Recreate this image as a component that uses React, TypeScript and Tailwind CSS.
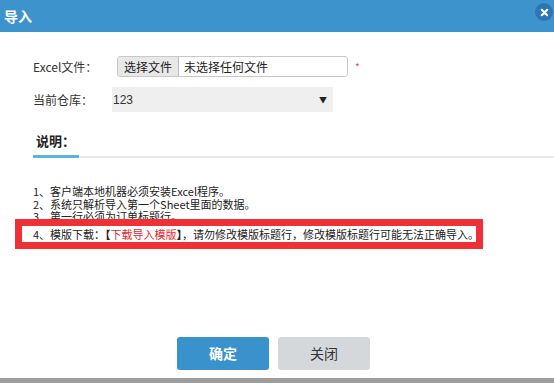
import React from 'react'

const cjk = { fontFamily: '"Noto Sans CJK SC", "Liberation Sans", sans-serif' }

function CloseButton() {
  return (
    <span className="absolute right-[1px] top-[3px] flex h-[18px] w-[18px] items-center justify-center rounded-full bg-[#2c76b4]">
      <svg viewBox="0 0 10 10" className="h-[9px] w-[9px]">
        <path d="M2 2 L8 8 M8 2 L2 8" stroke="#fff" strokeWidth="2.4" strokeLinecap="round" />
      </svg>
    </span>
  )
}

export default function App() {
  return (
    <div className="flex h-[383px] w-[554px] flex-col overflow-hidden bg-white text-[#333]" style={cjk}>
      <div className="relative flex h-[32px] shrink-0 items-center bg-[#3d94cc] pl-[4px]">
        <h1 className="text-[14px] font-bold text-white">导入</h1>
        <CloseButton />
      </div>

      <div className="pl-[33px]">
        <div className="mt-[24px] flex h-[21px] items-center text-[12px]">
          <label className="w-[84px]">Excel文件：</label>
          <div className="flex h-[21px] w-[231px] items-center rounded-[3px] border border-[#c8c8c8] bg-white">
            <span className="flex h-full w-[61px] items-center justify-center rounded-l-[2px] border-r border-[#bdbdbd] bg-[#e8e8e8] text-[#222]">
              选择文件
            </span>
            <span className="pl-[5px] text-[#222]">未选择任何文件</span>
          </div>
          <span className="ml-[7px] text-[10px] text-[#e04b4b]">*</span>
        </div>

        <div className="mt-[10px] flex h-[25px] items-center text-[12px]">
          <label className="w-[79px]">当前仓库：</label>
          <div className="flex h-[25px] w-[221px] items-center justify-between bg-[#efefef] pl-[1px] pr-[6px]">
            <span className="text-[#333]" style={{ fontFamily: '"Liberation Sans", sans-serif' }}>123</span>
            <span className="text-[8px] text-[#222]">▼</span>
          </div>
        </div>

        <div className="mt-[21px] flex border-b-2 border-[#e6e8ea]">
          <div className="-mb-[2px] w-[46px] border-b-[3px] border-[#5cb3e3] pb-[6px] pl-[3px] text-[13px] font-bold leading-[16px] text-[#222]">
            说明：
          </div>
        </div>

        <div className="mt-[27px] text-[11px] leading-[12.5px] text-[#222]">
          <p>1、客户端本地机器必须安装Excel程序。</p>
          <p>2、系统只解析导入第一个Sheet里面的数据。</p>
          <p>3、第一行必须为订单标题行。</p>
          <div className="relative -mt-[4px] ml-[-18px] w-[468px] border-[7px] border-[#ef3137] bg-white">
            <div className="h-[16px] overflow-hidden whitespace-nowrap pl-[11px] leading-[16px]">
              4、模版下载：<b>【</b><span className="text-[#e8262d]">下载导入模版</span><b>】</b>，请勿修改模版标题行，修改模版标题行可能无法正确导入。
            </div>
          </div>
        </div>
      </div>

      <div className="mt-[88px] flex gap-[9px] pl-[177px]">
        <button className="h-[33px] w-[92px] rounded-[3px] bg-[#3a92cd] text-[14px] font-bold text-white">确定</button>
        <button className="h-[33px] w-[92px] rounded-[3px] bg-[#d5d8db] text-[14px] text-[#333]">关闭</button>
      </div>

      <div className="mt-auto h-[5px] bg-[#9d9d9d]" />
    </div>
  )
}
